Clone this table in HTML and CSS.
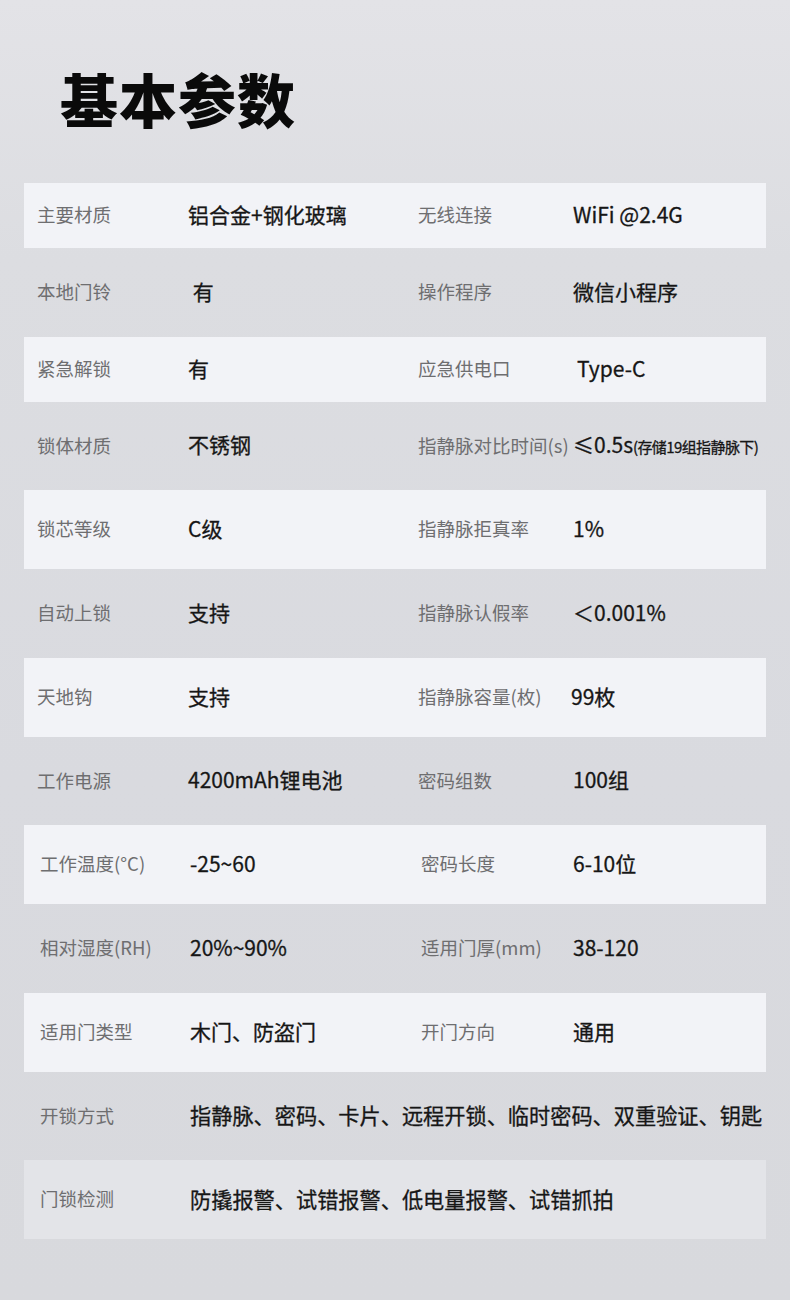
FILE: index.html
```html
<!DOCTYPE html>
<html lang="zh-CN">
<head>
<meta charset="utf-8">
<title>基本参数</title>
<link rel="stylesheet" href="styles.css">
</head>
<body>
<main class="page">
  <h1 class="title">基本参数</h1>
  <section class="specs">
    <div class="row row--s row--white">
      <span class="label">主要材质</span><span class="value">铝合金+钢化玻璃</span>
      <span class="label">无线连接</span><span class="value">WiFi @2.4G</span>
    </div>
    <div class="row row--l">
      <span class="label">本地门铃</span><span class="value">&nbsp;有</span>
      <span class="label">操作程序</span><span class="value">微信小程序</span>
    </div>
    <div class="row row--s row--white">
      <span class="label">紧急解锁</span><span class="value">有</span>
      <span class="label">应急供电口</span><span class="value value--in">Type-C</span>
    </div>
    <div class="row row--l">
      <span class="label">锁体材质</span><span class="value">不锈钢</span>
      <span class="label">指静脉对比时间(s)</span><span class="value">≤0.5s<small class="note">(存储19组指静脉下)</small></span>
    </div>
    <div class="row row--m row--white">
      <span class="label">锁芯等级</span><span class="value">C级</span>
      <span class="label">指静脉拒真率</span><span class="value">1%</span>
    </div>
    <div class="row row--l">
      <span class="label">自动上锁</span><span class="value">支持</span>
      <span class="label">指静脉认假率</span><span class="value">＜0.001%</span>
    </div>
    <div class="row row--m row--white">
      <span class="label">天地钩</span><span class="value">支持</span>
      <span class="label">指静脉容量(枚)</span><span class="value value--out">99枚</span>
    </div>
    <div class="row row--l">
      <span class="label">工作电源</span><span class="value">4200mAh锂电池</span>
      <span class="label">密码组数</span><span class="value">100组</span>
    </div>
    <div class="row row--m row--white row--shift">
      <span class="label">工作温度(°C)</span><span class="value">-25~60</span>
      <span class="label">密码长度</span><span class="value">6-10位</span>
    </div>
    <div class="row row--l row--shift">
      <span class="label">相对湿度(RH)</span><span class="value">20%~90%</span>
      <span class="label">适用门厚(mm)</span><span class="value">38-120</span>
    </div>
    <div class="row row--m row--white row--shift">
      <span class="label">适用门类型</span><span class="value">木门、防盗门</span>
      <span class="label">开门方向</span><span class="value">通用</span>
    </div>
    <div class="row row--l row--shift row--wide">
      <span class="label">开锁方式</span><span class="value value--long">指静脉、密码、卡片、远程开锁、临时密码、双重验证、钥匙</span>
    </div>
    <div class="row row--m row--dim row--shift row--wide">
      <span class="label">门锁检测</span><span class="value value--long">防撬报警、试错报警、低电量报警、试错抓拍</span>
    </div>
  </section>
</main>
</body>
</html>
```

FILE: styles.css
```css
html, body {
  margin: 0;
  padding: 0;
}

body {
  width: 790px;
  min-height: 1300px;
  background: linear-gradient(180deg, #e3e3e7 0%, #dcdde1 20%, #d9dadf 60%, #d8d9dd 100%);
  font-family: "Noto Sans CJK SC", "Noto Sans", sans-serif;
  color: #1e1e1e;
}

.page {
  padding: 69px 24px 0 24px;
}

.title {
  margin: 0 0 56px 36px;
  font-size: 58px;
  line-height: 58px;
  font-weight: 900;
  letter-spacing: 1px;
  color: #0a0a0a;
}

.specs {
  display: flex;
  flex-direction: column;
}

.row {
  display: grid;
  grid-template-columns: 151px 230px 155px 1fr;
  align-items: center;
  padding-left: 13px;
  white-space: nowrap;
}

.row--s { height: 65px; }
.row--m { height: 79px; }
.row--l { height: 88.5px; }

.row--white { background: #f2f3f7; }
.row--dim { background: #e3e4e8; }

.row--shift {
  padding-left: 16px;
  grid-template-columns: 150px 231px 152px 1fr;
}

.row--wide {
  grid-template-columns: 150px 1fr;
}

.label {
  font-size: 18.5px;
  color: #6e6e70;
  font-weight: 400;
  line-height: 1;
  margin-bottom: 2px;
}

.value {
  font-size: 21px;
  color: #161616;
  font-weight: 400;
  line-height: 1;
  margin-bottom: 2px;
  -webkit-text-stroke: 0.3px #161616;
}

.value--long {
  font-size: 21.2px;
}

.value--in { padding-left: 4px; }
.value--out { margin-left: -2px; }

.note {
  font-size: 15px;
  letter-spacing: -0.6px;
  font-weight: 400;
}
```
